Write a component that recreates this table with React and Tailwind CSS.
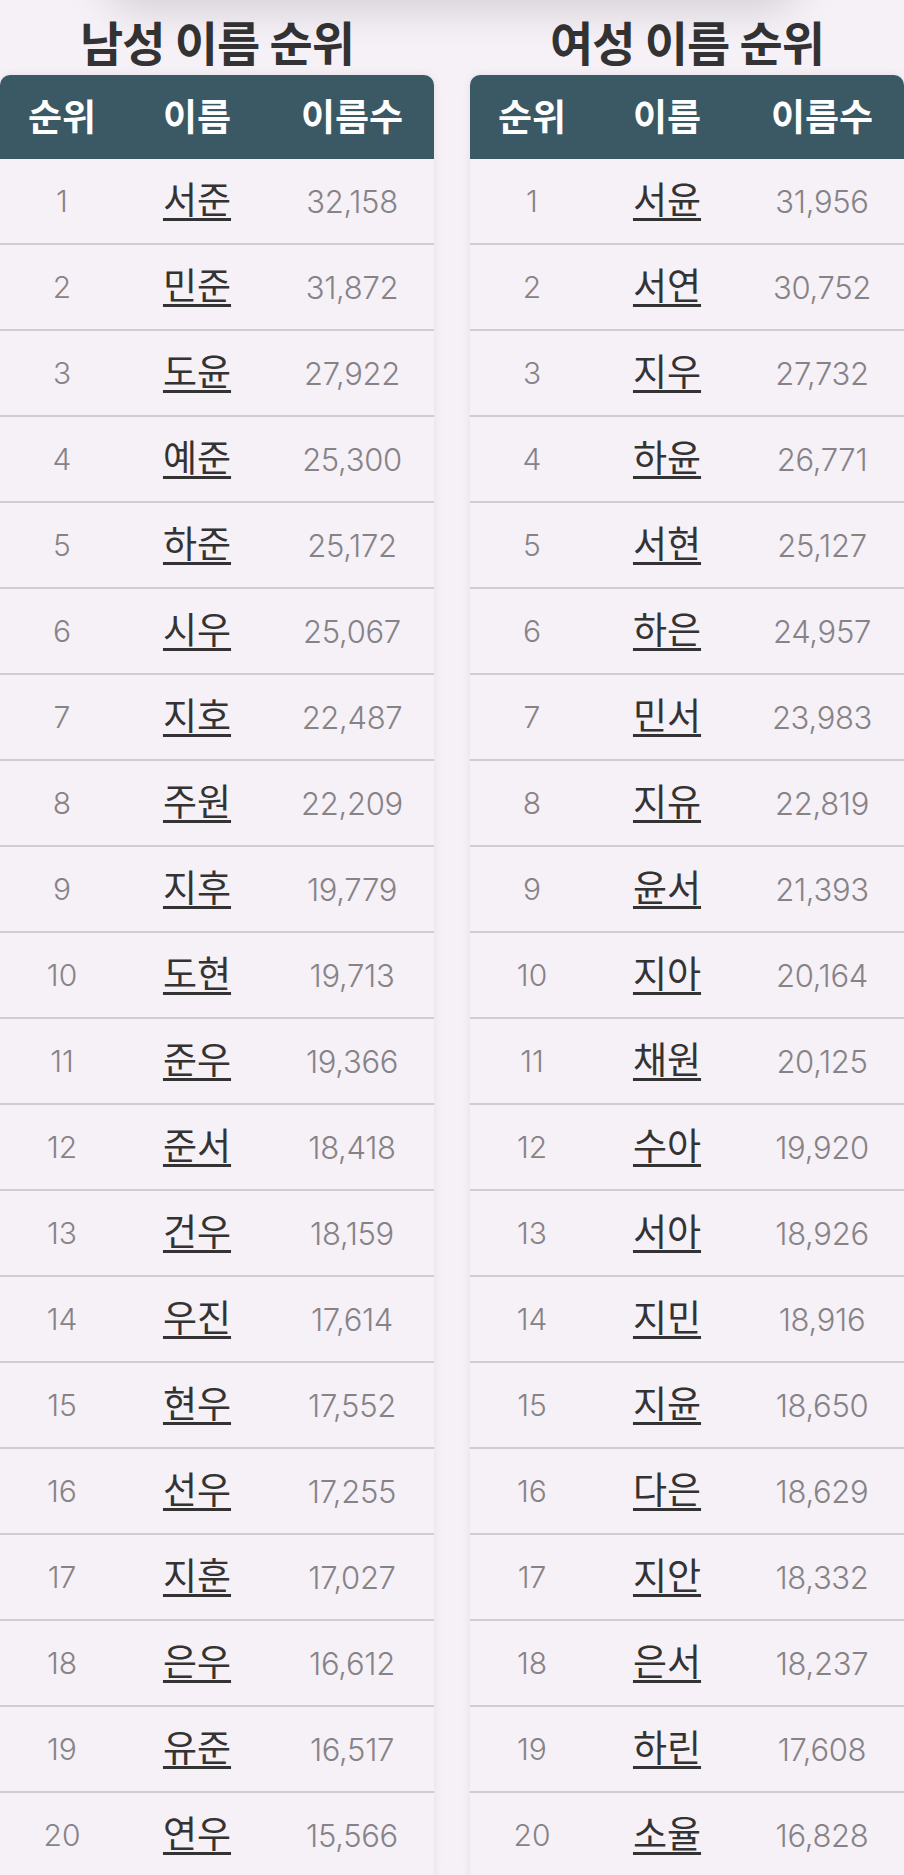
import React from 'react'

const male = [
  ['서준', '32,158'], ['민준', '31,872'], ['도윤', '27,922'], ['예준', '25,300'], ['하준', '25,172'],
  ['시우', '25,067'], ['지호', '22,487'], ['주원', '22,209'], ['지후', '19,779'], ['도현', '19,713'],
  ['준우', '19,366'], ['준서', '18,418'], ['건우', '18,159'], ['우진', '17,614'], ['현우', '17,552'],
  ['선우', '17,255'], ['지훈', '17,027'], ['은우', '16,612'], ['유준', '16,517'], ['연우', '15,566'],
]

const female = [
  ['서윤', '31,956'], ['서연', '30,752'], ['지우', '27,732'], ['하윤', '26,771'], ['서현', '25,127'],
  ['하은', '24,957'], ['민서', '23,983'], ['지유', '22,819'], ['윤서', '21,393'], ['지아', '20,164'],
  ['채원', '20,125'], ['수아', '19,920'], ['서아', '18,926'], ['지민', '18,916'], ['지윤', '18,650'],
  ['다은', '18,629'], ['지안', '18,332'], ['은서', '18,237'], ['하린', '17,608'], ['소율', '16,828'],
]

const font = { fontFamily: 'Inter, "Noto Sans CJK KR", sans-serif' }

function RankTable({ title, rows }) {
  return (
    <section className="w-[434px] shrink-0">
      <h2 className="h-[75px] flex items-center justify-center pt-[12px] text-[47px] font-bold tracking-[-0.02em] text-[#333333] leading-none">
        {title}
      </h2>
      <div className="rounded-t-[10px] bg-[#f6f0f7] shadow-[0_0_10px_rgba(0,0,0,0.08)]">
        <div className="grid grid-cols-[124px_146px_164px] h-[84px] items-center rounded-t-[10px] bg-[#3b5965] text-white text-[37px] font-bold leading-none">
          <div className="text-center">순위</div>
          <div className="text-center">이름</div>
          <div className="text-center">이름수</div>
        </div>
        {rows.map(([name, count], i) => (
          <div
            key={name + i}
            className="grid grid-cols-[124px_146px_164px] h-[86px] items-center border-b-2 border-[#d0cbd1]"
          >
            <div className="text-center text-[30px] font-light text-[#868387] leading-none">{i + 1}</div>
            <div className="text-center">
              <a href="#" className="text-[37px] text-[#333333] underline decoration-[3px] underline-offset-[4px] leading-none">
                {name}
              </a>
            </div>
            <div className="text-center text-[31px] font-light tracking-[-0.01em] text-[#868387] leading-none">{count}</div>
          </div>
        ))}
      </div>
    </section>
  )
}

export default function App() {
  return (
    <div className="relative w-[904px] h-[1875px] overflow-hidden bg-[#f6f0f7]" style={font}>
      {/* shadow of the bar sitting above the viewport */}
      <div className="absolute left-[110px] right-[110px] top-[-70px] h-[70px] rounded-full bg-[#f6f0f7] shadow-[0_0_40px_12px_rgba(0,0,0,0.13)]" />
      <div className="flex gap-[36px]">
        <RankTable title="남성 이름 순위" rows={male} />
        <RankTable title="여성 이름 순위" rows={female} />
      </div>
    </div>
  )
}
